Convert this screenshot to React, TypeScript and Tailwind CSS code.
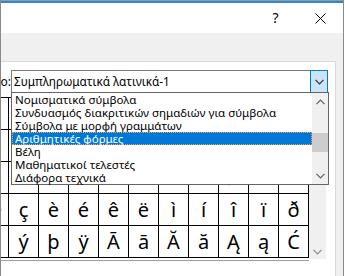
import React from "react";

const rows: string[][] = [
  ["¤", "¥", "¦", "§", "¨", "©", "ª", "«", "¬", "\u00AD", "®"],
  ["º", "»", "¼", "½", "¾", "¿", "À", "Á", "Â", "Ã", "Ä"],
  ["Ð", "Ñ", "Ò", "Ó", "Ô", "Õ", "Ö", "×", "Ø", "Ù", "Ú"],
  ["æ", "ç", "è", "é", "ê", "ë", "ì", "í", "î", "ï", "ð"],
  ["ü", "ý", "þ", "ÿ", "Ā", "ā", "Ă", "ă", "Ą", "ą", "Ć"],
];

const items = [
  "Νομισματικά σύμβολα",
  "Συνδυασμός διακριτικών σημαδιών για σύμβολα",
  "Σύμβολα με μορφή γραμμάτων",
  "Αριθμητικές φόρμες",
  "Βέλη",
  "Μαθηματικοί τελεστές",
  "Διάφορα τεχνικά",
];

function ChevronDown({ color = "#606060" }: { color?: string }) {
  return (
    <svg width="9" height="6" viewBox="0 0 9 6">
      <path d="M0.5 0.8 L4.5 4.8 L8.5 0.8" fill="none" stroke={color} strokeWidth="1.2" />
    </svg>
  );
}

function ChevronUp({ color = "#606060" }: { color?: string }) {
  return (
    <svg width="9" height="6" viewBox="0 0 9 6">
      <path d="M0.5 5.2 L4.5 1.2 L8.5 5.2" fill="none" stroke={color} strokeWidth="1.2" />
    </svg>
  );
}

export default function App() {
  return (
    <div className="w-[345px] h-[276px] overflow-hidden bg-white flex font-['Noto_Sans',sans-serif] text-black">
      <div className="w-[344px] h-full border-l border-r border-[#8a8a8a] flex flex-col">
        {/* title bar */}
        <div className="h-[1px] bg-[#9a9a9a]" />
        <div className="h-[2px] bg-[#2b88d8]" />
        <div className="h-[30px] bg-white flex justify-end items-center">
          <div className="w-[45px] h-full flex items-center justify-center text-[14px] leading-none">?</div>
          <div className="w-[45px] h-full flex items-center justify-center">
            <svg width="11" height="11" viewBox="0 0 11 11">
              <path d="M0.5 0.5 L10.5 10.5 M10.5 0.5 L0.5 10.5" stroke="#000" strokeWidth="1" />
            </svg>
          </div>
        </div>
        {/* body */}
        <div className="flex-1 bg-[#f0f0f0] pt-[28px] flex flex-col">
          <div className="w-[335px] flex-1 bg-white border-t border-r border-[#d9d9d9] relative flex flex-col">
            <div className="pt-[8px] flex items-start">
              <div className="w-[10px] h-[23px] overflow-hidden flex justify-end items-center text-[12px] whitespace-nowrap">
                ο:
              </div>
              <div className="w-[317px] h-[23px] border border-[#7a7a7a] flex items-center relative">
                <div className="flex-1 pl-[2px] text-[11.75px] leading-none whitespace-nowrap">
                  Συμπληρωματικά λατινικά-1
                </div>
                <div className="w-[18px] h-[23px] -my-px -mr-px border border-[#0078d7] bg-[#cce4f7] flex items-center justify-center">
                  <ChevronDown color="#333" />
                </div>
              </div>
            </div>

            {/* character grid */}
            <div className="mt-[4px] flex items-start">
              <div className="w-[308px] overflow-hidden border-t border-black border-b-0">
                <div className="ml-[-22px] grid grid-cols-[repeat(11,30px)]">
                  {rows.flatMap((r, ri) =>
                    r.map((c, ci) => (
                      <div
                        key={`${ri}-${ci}`}
                        className="h-[32px] border-r border-b border-black flex items-center justify-center text-[20px] leading-[31px] font-['Noto_Sans',sans-serif]"
                      >
                        {c}
                      </div>
                    ))
                  )}
                </div>
                <div className="h-[3px] border-b border-[#a0a0a0]" />
              </div>
              <div className="w-[17px] h-[162px] bg-[#f0f0f0] flex flex-col justify-end items-center pb-[4px]">
                <ChevronDown color="#8a8a8a" />
              </div>
            </div>

            {/* dropdown list overlay */}
            <div className="absolute left-[10px] top-[30px] w-[318px] h-[93px] bg-white border border-[#646464] flex">
              <div className="flex-1 flex flex-col">
                {items.map((t, i) => (
                  <div
                    key={t}
                    className={
                      i === 3
                        ? "h-[13px] pl-[3px] text-[11.5px] leading-[13px] whitespace-nowrap bg-[#0078d7] text-white outline outline-1 outline-dotted outline-[#f5a742] -outline-offset-1"
                        : "h-[13px] pl-[3px] text-[11.5px] leading-[13px] whitespace-nowrap"
                    }
                  >
                    {t}
                  </div>
                ))}
              </div>
              <div className="w-[16px] bg-[#f0f0f0] flex flex-col">
                <div className="h-[17px] flex items-center justify-center">
                  <ChevronUp />
                </div>
                <div className="h-[23px]" />
                <div className="h-[19px] bg-[#cdcdcd]" />
                <div className="flex-1" />
                <div className="h-[17px] flex items-center justify-center">
                  <ChevronDown />
                </div>
              </div>
            </div>
          </div>
        </div>
      </div>
    </div>
  );
}
